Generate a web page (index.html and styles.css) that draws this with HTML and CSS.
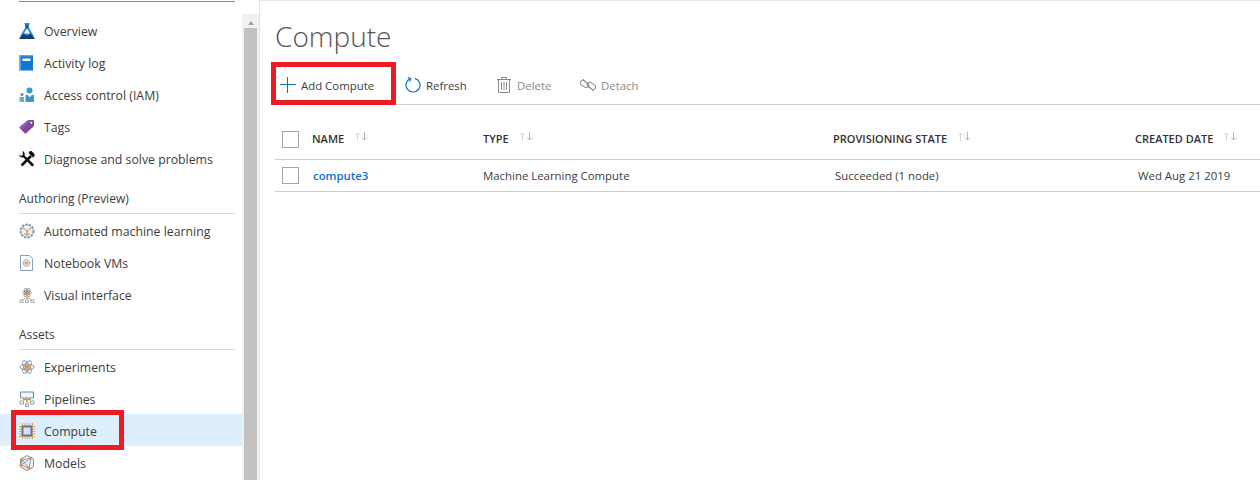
FILE: index.html
```html
<!DOCTYPE html>
<html lang="en">
<head>
  <meta charset="UTF-8">
  <title>Compute</title>
  <link rel="stylesheet" href="styles.css">
</head>
<body>
  <div class="page">
    <!-- Left navigation -->
    <aside class="sidebar">
      <div class="nav-column">
        <div class="search-box"></div>
        <nav class="nav-list">
          <a class="nav-item">
            <svg class="nav-icon" viewBox="0 0 16 16"><path d="M5.500 0h5v1.500H10V5l5 8.500H1L6 5V1.500h-.5z" fill="#2a8fd6"/><path d="M8 5.500l3 5H5z" fill="#fff"/><path d="M6.500 1.500h3V5l-1.500 1-1.500-1z" fill="#1a5fa8"/><path d="M0 15.500l4.500-5 3.500 2.500 3.500-2.500 4.500 5-1 .5H1z" fill="#183f73"/></svg>
            <span>Overview</span>
          </a>
          <a class="nav-item">
            <svg class="nav-icon" viewBox="0 0 16 16"><path d="M.5 0H14v15.500H.5z" fill="#0f78d0"/><path d="M.5 0H14v1.500H2v14H.5z" fill="#5ea0ef"/><path d="M3.500 3.500h8V6h-8z" fill="#fff"/></svg>
            <span>Activity log</span>
          </a>
          <a class="nav-item">
            <svg class="nav-icon" viewBox="0 0 16 16"><circle cx="10.500" cy="3.500" r="3" fill="#3999c6"/><path d="M6.500 8h8.500v7H6.500z" fill="#3999c6"/><path d="M9 8l1.800 2.500L12.500 8z" fill="#fff"/><circle cx="3" cy="7.500" r="1.500" fill="#3999c6"/><path d="M.5 10H5v5H.5z" fill="#59b4d9"/></svg>
            <span>Access control (IAM)</span>
          </a>
          <a class="nav-item">
            <svg class="nav-icon" viewBox="0 0 16 16"><path d="M9.500 1H14q1 0 1 1v4.500q0 .5-.5 1L7.500 14q-1 1-2 0L1 9.500q-1-1 0-2L8.500 1.500Q9 1 9.500 1z" fill="#804998"/><path d="M1 7.500L8.500 1.500 12 1 2.500 11z" fill="#a67af4" opacity=".4"/><circle cx="12.300" cy="3.700" r="1" fill="#fff"/></svg>
            <span>Tags</span>
          </a>
          <a class="nav-item">
            <svg class="nav-icon" viewBox="0 0 16 16"><path d="M2.500 14.500l9.500-9.500" stroke="#111" stroke-width="2.600" fill="none"/><path d="M11 0h1.500L15.500 3v2L14 6.500 9.500 2z" fill="#111"/><path d="M3.500 0q3 1.500 2 4.500L14.500 13q1 1.500-1.500 2.500L4.500 6.500Q1 7 0 3.500l2.500 1.500L4 3.500z" fill="#111"/></svg>
            <span>Diagnose and solve problems</span>
          </a>
        </nav>

        <h3 class="nav-heading">Authoring (Preview)</h3>
        <nav class="nav-list">
          <a class="nav-item">
            <svg class="nav-icon" viewBox="0 0 16 16"><circle cx="8" cy="8" r="6.500" fill="#eef0f3" stroke="#7f8fa0" stroke-width="1.800" stroke-dasharray="2.500 1"/><path d="M4 5l4 3 4-3M8 8v5M5 11h6" stroke="#8a97a3" stroke-width=".9" fill="none"/><g fill="#eca052"><circle cx="8" cy="8" r="1.300"/><circle cx="4.500" cy="5" r=".9"/><circle cx="11.500" cy="5" r=".9"/><circle cx="8" cy="12" r=".9"/></g></svg>
            <span>Automated machine learning</span>
          </a>
          <a class="nav-item">
            <svg class="nav-icon" viewBox="0 0 16 16"><path d="M1.500.5h9l3 3v12h-12z" fill="#fff" stroke="#8aa0b8"/><circle cx="7.500" cy="8" r="3.500" fill="#d5dce3" stroke="#9aa7b3" stroke-dasharray="1.500 .7"/><circle cx="7.500" cy="8" r="1.500" fill="#ef9a45"/></svg>
            <span>Notebook VMs</span>
          </a>
          <a class="nav-item">
            <svg class="nav-icon" viewBox="0 0 16 16"><g fill="none" stroke="#8a97a3" stroke-width=".9"><ellipse cx="8" cy="5.500" rx="4.500" ry="2"/><ellipse cx="8" cy="5.500" rx="4.500" ry="2" transform="rotate(60 8 5.500)"/><ellipse cx="8" cy="5.500" rx="4.500" ry="2" transform="rotate(120 8 5.500)"/></g><circle cx="8" cy="5.500" r="1.700" fill="#f08a24"/><path d="M8 8v4M8 10.500L3 13M8 10.500l5 2.500" stroke="#e8a25a" fill="none"/><path d="M1 13h3v2.500H1zM6.500 13h3v2.500h-3zM12 13h3v2.500h-3z" fill="#fff" stroke="#8a97a3" stroke-width=".8"/></svg>
            <span>Visual interface</span>
          </a>
        </nav>

        <h3 class="nav-heading">Assets</h3>
        <nav class="nav-list">
          <a class="nav-item">
            <svg class="nav-icon" viewBox="0 0 16 16"><g fill="none" stroke="#8294a6"><ellipse cx="8" cy="8" rx="7" ry="3"/><ellipse cx="8" cy="8" rx="7" ry="3" transform="rotate(60 8 8)"/><ellipse cx="8" cy="8" rx="7" ry="3" transform="rotate(120 8 8)"/></g><circle cx="8" cy="8" r="2.300" fill="#f68b1f"/></svg>
            <span>Experiments</span>
          </a>
          <a class="nav-item">
            <svg class="nav-icon" viewBox="0 0 16 16"><path d="M1.500 1h13v6h-13z" fill="#f2f5f8" stroke="#6f8aa5"/><path d="M4 8.500h8M8 8.500V12" stroke="#f08a24" stroke-width="1.500" fill="none"/><path d="M1 10h3.500v3H1zM11.500 10H15v3h-3.500zM6.500 13H9.500v2.500h-3z" fill="#fff" stroke="#6f8aa5" stroke-width=".8"/></svg>
            <span>Pipelines</span>
          </a>
          <a class="nav-item is-selected">
            <svg class="nav-icon" viewBox="0 0 16 16"><path d="M3.500 0v2M6 0v2M8.500 0v2M11 0v2M13.500 0v2M3.500 14v2M6 14v2M8.500 14v2M11 14v2M13.500 14v2M0 3.500h2M0 6h2M0 8.500h2M0 11h2M0 13.500h2M14 3.500h2M14 6h2M14 8.500h2M14 11h2M14 13.500h2" stroke="#f59a2f"/><path d="M2 2h12v12H2z" fill="#f3c58c"/><path d="M3.500 3.500h9v9h-9z" fill="#d3e3f1" stroke="#5f7a94" stroke-width="2"/></svg>
            <span>Compute</span>
          </a>
          <a class="nav-item">
            <svg class="nav-icon" viewBox="0 0 16 16"><path d="M8 .5l6.500 3.700v7.600L8 15.500l-6.500-3.700V4.200z" fill="#eef0f3" stroke="#8294a6"/><path d="M3 5l9-2-2 10-8-3zM3 5l7 8M12 3l-10 7" fill="none" stroke="#8294a6" stroke-width=".9"/><g fill="#f68b1f"><circle cx="3" cy="5" r="1.600"/><circle cx="12" cy="3" r="1.600"/><circle cx="10" cy="13" r="1.600"/><circle cx="2" cy="10" r="1.600"/></g></svg>
            <span>Models</span>
          </a>
        </nav>
      </div>
      <div class="scrollbar">
        <div class="scroll-arrow"></div>
        <div class="scroll-thumb"></div>
      </div>
    </aside>

    <!-- Main content -->
    <main class="content">
      <h1 class="title">Compute</h1>
      <div class="toolbar">
        <button class="tool tool-add">
          <svg class="tool-icon" viewBox="0 0 16 16"><path d="M7.500 0v16M0 7.500h16" stroke="#0f6fd6" fill="none"/></svg>
          Add Compute
        </button>
        <button class="tool tool-refresh">
          <svg class="tool-icon" viewBox="0 0 16 16"><path d="M5.500 1.500A7 7 0 1 0 10 1.300" stroke="#0f6fd6" stroke-width="1.200" fill="none"/><path d="M3 .5L5.800 1.700 4.500 4.500" stroke="#0f6fd6" stroke-width="1.200" fill="none"/></svg>
          Refresh
        </button>
        <button class="tool tool-delete is-disabled">
          <svg class="tool-icon" viewBox="0 0 16 16"><path d="M1 2.500h14M5.500 2.500v-2h5v2M2.500 2.500v13h11v-13M5.500 5v8M8 5v8M10.500 5v8" stroke="#8a8a8a" fill="none"/></svg>
          Delete
        </button>
        <button class="tool tool-detach is-disabled">
          <svg class="tool-icon" viewBox="0 0 16 16"><g fill="none" stroke="#8a8a8a"><rect x="0" y="4.500" width="9" height="5" rx="2.500" transform="rotate(35 4.500 7)"/><rect x="7" y="6.500" width="9" height="5" rx="2.500" transform="rotate(35 11.500 9)"/><path d="M3 2l10.500 12.500"/></g></svg>
          Detach
        </button>
      </div>

      <div class="table">
        <div class="table-row table-head">
          <div class="checkbox"></div>
          <div class="head-cell">NAME<svg class="sort" viewBox="0 0 14 9"><path d="M3.500 9V1M1 3.500l2.500-2.500L6 3.500" stroke="#d4d4d4" fill="none"/><path d="M10.500 0v8M8 5.500L10.500 8 13 5.500" stroke="#b4b4b4" fill="none"/></svg></div>
          <div class="head-cell">TYPE<svg class="sort" viewBox="0 0 14 9"><path d="M3.500 9V1M1 3.500l2.500-2.500L6 3.500" stroke="#d4d4d4" fill="none"/><path d="M10.500 0v8M8 5.500L10.500 8 13 5.500" stroke="#b4b4b4" fill="none"/></svg></div>
          <div class="head-cell">PROVISIONING STATE<svg class="sort" viewBox="0 0 14 9"><path d="M3.500 9V1M1 3.500l2.500-2.500L6 3.500" stroke="#d4d4d4" fill="none"/><path d="M10.500 0v8M8 5.500L10.500 8 13 5.500" stroke="#b4b4b4" fill="none"/></svg></div>
          <div class="head-cell">CREATED DATE<svg class="sort" viewBox="0 0 14 9"><path d="M3.500 9V1M1 3.500l2.500-2.500L6 3.500" stroke="#d4d4d4" fill="none"/><path d="M10.500 0v8M8 5.500L10.500 8 13 5.500" stroke="#b4b4b4" fill="none"/></svg></div>
        </div>
        <div class="table-row table-body">
          <div class="checkbox"></div>
          <div class="col-name"><a class="row-link">compute3</a></div>
          <div class="col-type">Machine Learning Compute</div>
          <div class="col-state">Succeeded (1 node)</div>
          <div class="col-date">Wed Aug 21 2019</div>
        </div>
      </div>
    </main>
  </div>

  <!-- Red annotation boxes -->
  <div class="callout callout-nav"></div>
  <div class="callout callout-add"></div>
</body>
</html>
```

FILE: styles.css
```css
/* Basic styling */
html, body {
  margin: 0;
  height: 480px;
  overflow: hidden;
  background-color: #fff;
}
body {
  font-family: "Open Sans", "Noto Sans", sans-serif;
  font-size: 11.4px;
  color: #3c3c3c;
}
.page {
  display: flex;
  height: 480px;
}

/* Sidebar */
.sidebar {
  display: flex;
  flex: 0 0 260px;
  box-sizing: border-box;
  border-right: 1px solid #e3e3e3;
}
.nav-column {
  flex: 0 0 242px;
  height: 480px;
  overflow: hidden;
}
.search-box {
  height: 1px;
  margin: 0 7px 0 19px;
  border-bottom: 1px solid #8a8a8a;
}
.nav-list {
  display: flex;
  flex-direction: column;
}
.nav-list:first-of-type {
  margin-top: 12px;
}
.nav-item {
  display: flex;
  align-items: center;
  flex: none;
  box-sizing: border-box;
  height: 32px;
  padding: 2px 0 0 19px;
  font-size: 12.300px;
}
.nav-item.is-selected {
  background-color: #ddeefd;
}
.nav-icon {
  flex: none;
  width: 16px;
  height: 16px;
  margin-right: 9px;
}
.nav-heading {
  box-sizing: border-box;
  height: 40px;
  margin: 0 7px 0 19px;
  padding-top: 17px;
  border-bottom: 1px solid #d8d8d8;
  font-size: 12px;
  font-weight: 400;
  line-height: 16px;
}
.scrollbar {
  flex: 0 0 17px;
  margin-top: 14px;
  background-color: #f1f1f1;
}
.scroll-arrow {
  width: 0;
  height: 0;
  margin: 7px auto 3px;
  border: 3px solid transparent;
  border-top: 0;
  border-bottom: 4px solid #a3a3a3;
}
.scroll-thumb {
  width: 13px;
  height: 460px;
  margin: 3px auto 0;
  background-color: #c1c1c1;
}

/* Main */
.content {
  flex: 1;
  min-width: 0;
  padding-left: 15px;
  border-top: 1px solid #e3e3e3;
}
.title {
  box-sizing: border-box;
  height: 61px;
  margin: 0;
  padding-top: 15px;
  font-size: 28px;
  font-weight: 300;
  line-height: 40px;
  color: #555;
}
.toolbar {
  display: flex;
  align-items: center;
  box-sizing: border-box;
  height: 43px;
  padding-top: 4px;
  border-bottom: 1px solid #cfcfcf;
}
.tool {
  display: flex;
  align-items: center;
  padding: 0;
  border: 0;
  background: none;
  font: inherit;
  color: #3c3c3c;
}
.tool.is-disabled {
  color: #8a8a8a;
}
.tool-icon {
  width: 16px;
  height: 16px;
  margin-right: 5px;
}
.tool-add {
  margin-left: 5px;
  width: 125px;
}
.tool-refresh {
  width: 91px;
}
.tool-delete {
  width: 84px;
}
.table {
  margin-top: 13px;
}
.table-row {
  display: grid;
  grid-template-columns: 37px 171px 350px 302px 1fr;
  align-items: center;
  box-sizing: border-box;
  border-bottom: 1px solid #cfcfcf;
}
.table-head {
  height: 42px;
  font-weight: 600;
  font-size: 11px;
  color: #333;
}
.table-head .checkbox {
  margin-top: 2px;
}
.table-body {
  height: 32px;
}
.head-cell {
  display: flex;
  align-items: center;
}
.checkbox {
  box-sizing: border-box;
  width: 17px;
  height: 17px;
  margin-left: 7px;
  border: 1px solid #a6a6a6;
}
.sort {
  width: 14px;
  height: 9px;
  margin: 0 0 4px 10px;
}
.table-body .col-name {
  padding-left: 1px;
}
.table-body .col-state {
  padding-left: 2px;
}
.table-body .col-date {
  padding-left: 3px;
}
.row-link {
  color: #0f6fd6;
  font-weight: 600;
}

/* Annotation boxes drawn over the screenshot */
.callout {
  position: absolute;
  box-sizing: border-box;
  border: 5px solid #ed1c24;
}
.callout-nav {
  left: 11px;
  top: 410px;
  width: 113px;
  height: 40px;
}
.callout-add {
  left: 271px;
  top: 62px;
  width: 125px;
  height: 43px;
}
```
